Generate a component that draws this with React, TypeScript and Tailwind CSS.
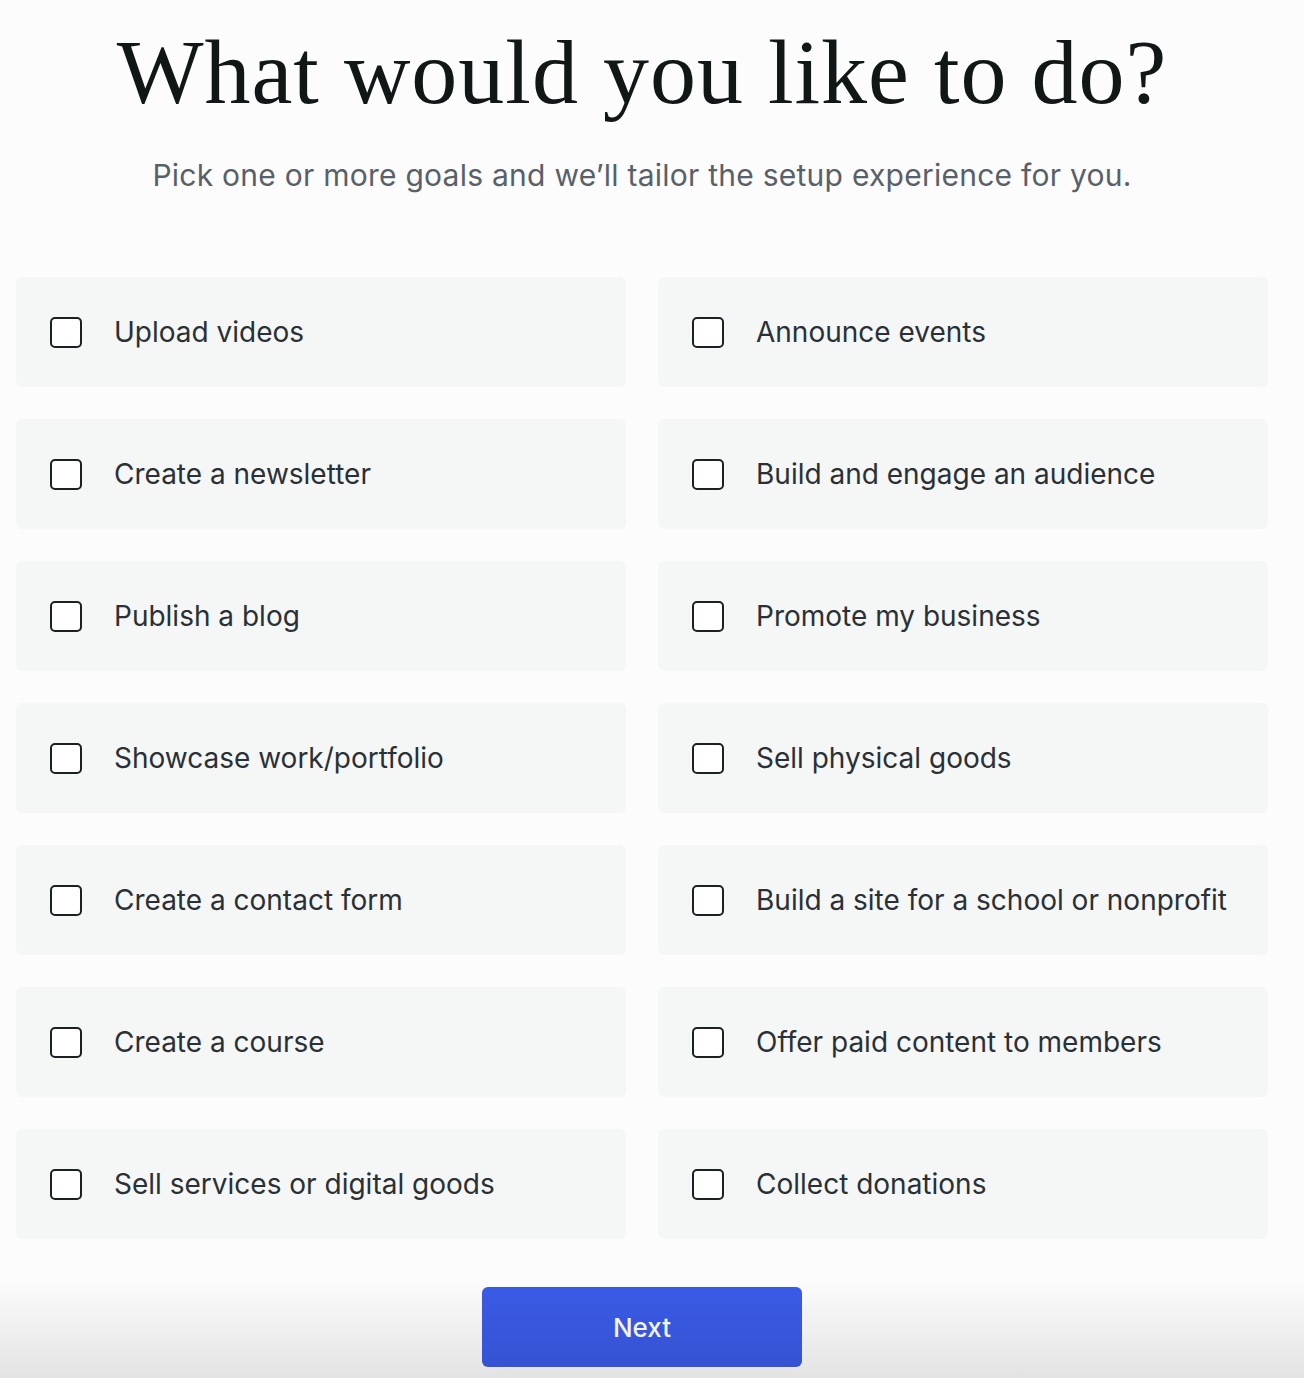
const goals: string[][] = [
  ["Upload videos", "Announce events"],
  ["Create a newsletter", "Build and engage an audience"],
  ["Publish a blog", "Promote my business"],
  ["Showcase work/portfolio", "Sell physical goods"],
  ["Create a contact form", "Build a site for a school or nonprofit"],
  ["Create a course", "Offer paid content to members"],
  ["Sell services or digital goods", "Collect donations"],
];

function GoalCard({ label }: { label: string }) {
  return (
    <label className="flex h-[110px] cursor-pointer items-center gap-8 rounded-md bg-[#f5f7f7] pl-[34px]">
      <span className="h-[31px] w-[32px] shrink-0 rounded-[5px] border-2 border-[#1b2023] bg-white" />
      <span className="text-[28px] tracking-[0px] text-[#2a3035]">{label}</span>
    </label>
  );
}

export default function App() {
  return (
    <div
      className="relative min-h-screen overflow-hidden bg-[#fcfcfc]"
      style={{ fontFamily: "Inter, 'Noto Sans', sans-serif" }}
    >
      <div className="ml-4 flex w-[1252px] flex-col items-center">
        <h1
          className="mt-[22px] text-[92px] leading-[100px] tracking-[1px] text-[#111617]"
          style={{ fontFamily: "'Liberation Serif', serif" }}
        >
          What would you like to do?
        </h1>
        <p className="mt-[33px] text-[30px] leading-[40px] tracking-[0.25px] text-[#58606a]">
          Pick one or more goals and we’ll tailor the setup experience for you.
        </p>

        <div className="mt-[82px] grid w-full grid-cols-2 gap-x-8 gap-y-8">
          {goals.flat().map((g) => (
            <GoalCard key={g} label={g} />
          ))}
        </div>

        <button
          type="button"
          className="mt-12 h-20 w-80 rounded-md bg-[#3a5be7] text-[26px] font-medium text-white"
        >
          Next
        </button>
      </div>

      <div className="pointer-events-none absolute inset-x-0 bottom-0 h-[100px] bg-gradient-to-b from-transparent to-black/10" />
    </div>
  );
}
